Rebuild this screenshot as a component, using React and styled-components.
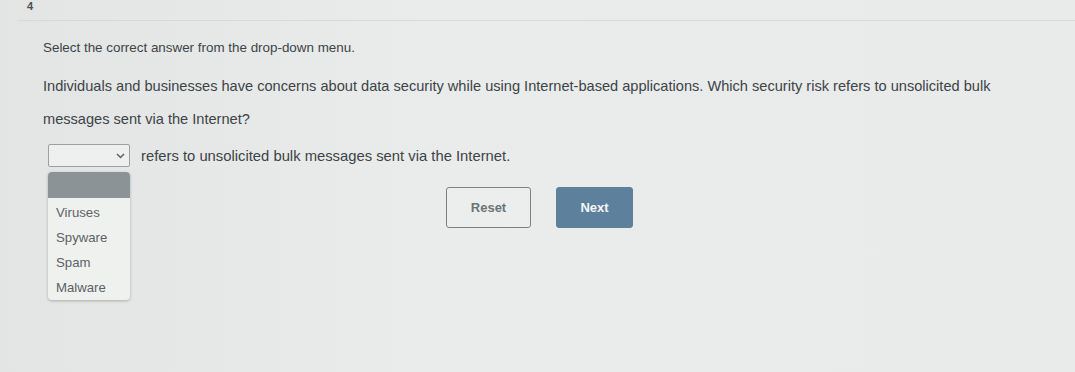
import React from "react";
import styled, { createGlobalStyle } from "styled-components";

const Global = createGlobalStyle`
  html, body { margin: 0; padding: 0; background: #e6e9e8; }
  body { font-family: "Liberation Sans", Arial, sans-serif; color: #3d4347; }
`;

const Page = styled.div`
  width: 1075px;
  height: 372px;
  background: linear-gradient(90deg, #e2e5e4 0%, #e9eceb 40%, #e8ebea 100%);
  overflow: hidden;
`;

const Header = styled.div`
  display: flex;
  align-items: flex-start;
  height: 20px;
  margin-left: 18px;
  border-bottom: 1px solid #d6dad9;
`;

const Num = styled.div`
  font-size: 11px;
  font-weight: bold;
  color: #4a4f52;
  padding: 0 0 0 9px;
`;

const Body = styled.div`
  padding: 19px 0 0 43px;
`;

const Instruction = styled.p`
  margin: 0;
  font-size: 13.4px;
  line-height: 16px;
`;

const Question = styled.p`
  margin: 14px 0 0;
  font-size: 14.6px;
  line-height: 33px;
  max-width: 960px;
`;

const AnswerRow = styled.div`
  display: flex;
  align-items: center;
  gap: 11px;
  margin-top: 8px;
  padding-left: 5px;
`;

const SelectBox = styled.div`
  height: 21px;
  width: 76px;
  border: 1px solid #9aa0a3;
  border-radius: 2px;
  background: #eef0ef;
  display: flex;
  align-items: center;
  justify-content: flex-end;
  padding-right: 4px;
  box-sizing: content-box;
`;

const Sentence = styled.span`
  font-size: 14.8px;
`;

const Lower = styled.div`
  display: flex;
  align-items: flex-start;
  margin-top: 5px;
  padding-left: 5px;
`;

const Menu = styled.div`
  width: 82px;
  height: 128px;
  background: #eff1ef;
  border-radius: 4px;
  box-shadow: 0 1px 3px rgba(0, 0, 0, 0.25);
  overflow: hidden;
`;

const MenuHead = styled.div`
  height: 26px;
  background: #8c9396;
`;

const Options = styled.div`
  padding-top: 2px;
`;

const Option = styled.div`
  font-size: 13.2px;
  color: #5b6165;
  height: 25px;
  line-height: 25px;
  padding-left: 8px;
`;

const Buttons = styled.div`
  display: flex;
  gap: 25px;
  margin-left: 316px;
  margin-top: 15px;
`;

const Button = styled.button`
  height: 41px;
  border-radius: 3px;
  font-family: "Liberation Sans", Arial, sans-serif;
  font-size: 13px;
  font-weight: bold;
  cursor: pointer;
  width: ${p => p.$w}px;
  border: ${p => (p.$primary ? "1px solid #5e7f99" : "1.5px solid #7b8185")};
  background: ${p => (p.$primary ? "#5d809c" : "#eceeed")};
  color: ${p => (p.$primary ? "#f4f6f8" : "#6b7377")};
`;

export default function App() {
  return (
    <Page>
      <Global />
      <Header>
        <Num>4</Num>
      </Header>
      <Body>
        <Instruction>Select the correct answer from the drop-down menu.</Instruction>
        <Question>
          Individuals and businesses have concerns about data security while using Internet-based applications. Which security risk refers to unsolicited bulk messages sent via the Internet?
        </Question>
        <AnswerRow>
          <SelectBox>
            <svg width="9" height="6" viewBox="0 0 9 6">
              <path d="M1 1l3.5 3.5L8 1" fill="none" stroke="#5a6064" strokeWidth="1.5" />
            </svg>
          </SelectBox>
          <Sentence>refers to unsolicited bulk messages sent via the Internet.</Sentence>
        </AnswerRow>
        <Lower>
          <Menu>
            <MenuHead />
            <Options>
              <Option>Viruses</Option>
              <Option>Spyware</Option>
              <Option>Spam</Option>
              <Option>Malware</Option>
            </Options>
          </Menu>
          <Buttons>
            <Button $w={85}>Reset</Button>
            <Button $w={77} $primary>Next</Button>
          </Buttons>
        </Lower>
      </Body>
    </Page>
  );
}
